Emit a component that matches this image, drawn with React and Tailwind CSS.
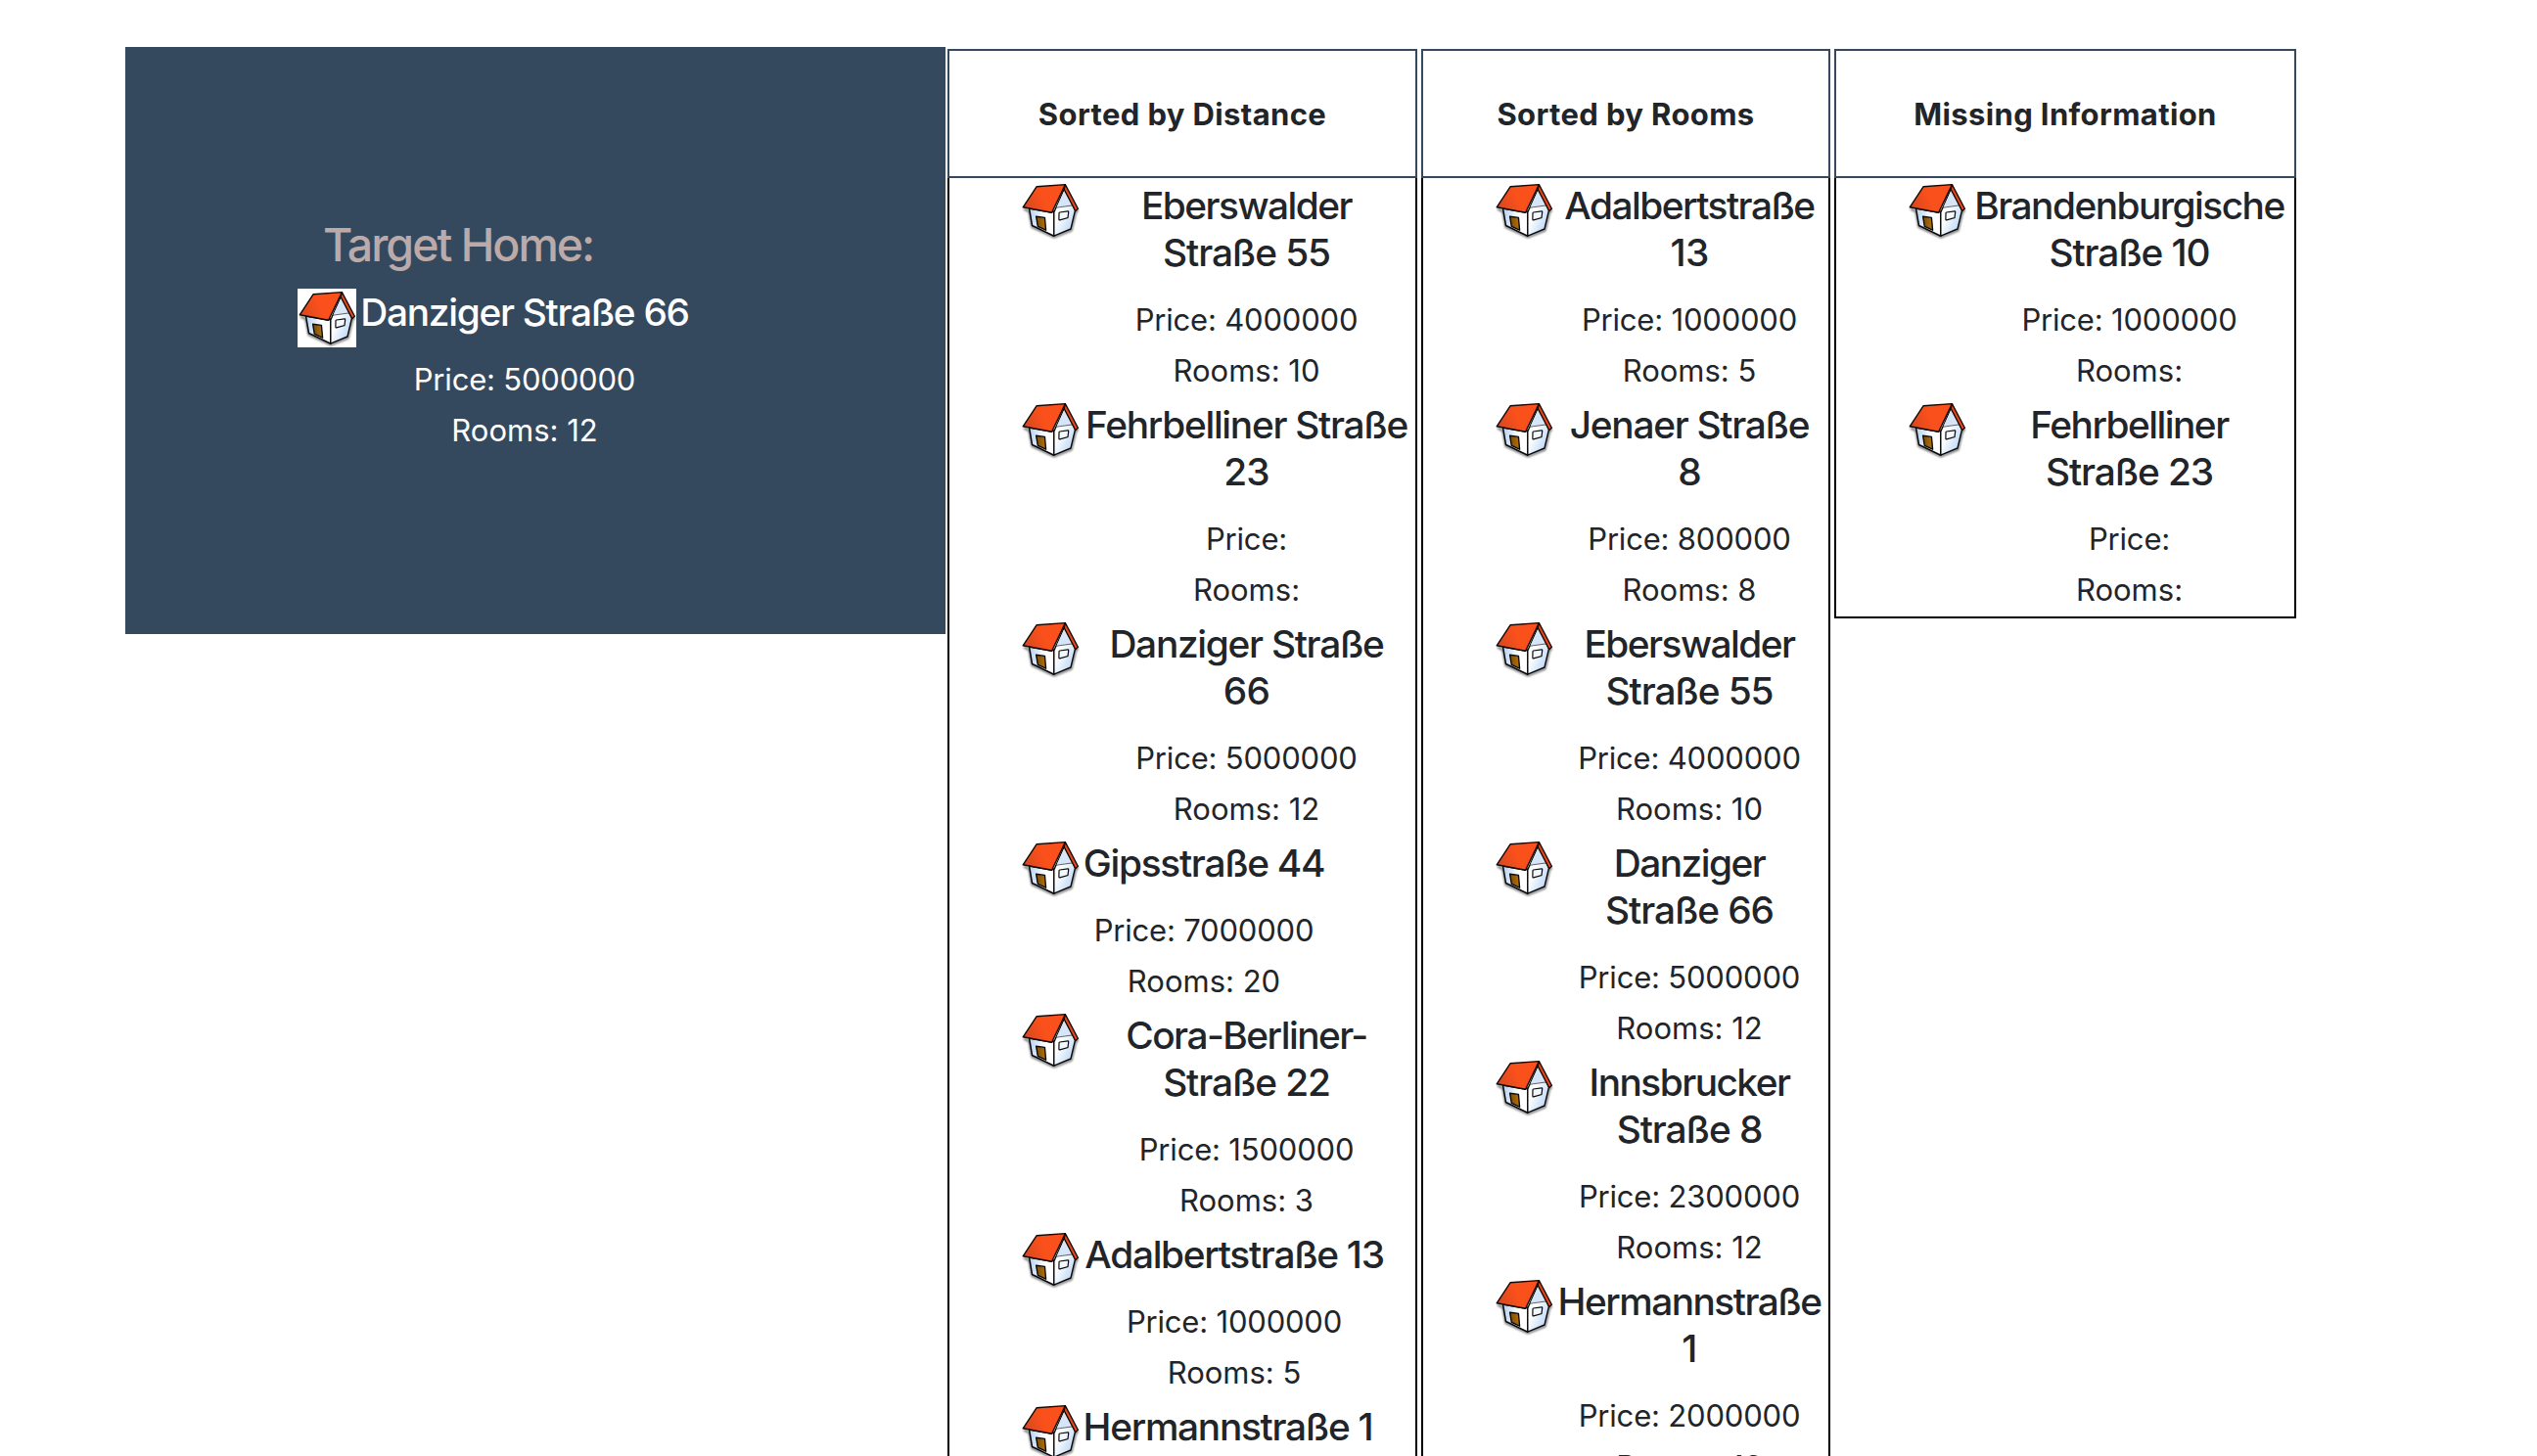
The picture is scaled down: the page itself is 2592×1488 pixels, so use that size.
function House({ className = "-mt-px" }) {
  return (
    <svg viewBox="0 0 60 60" className={`h-[60px] w-[60px] shrink-0 ${className}`}>
      <defs>
        <linearGradient id="roof" x1="0" y1="0.6" x2="1" y2="0.3">
          <stop offset="0" stopColor="#d8481f" />
          <stop offset="0.45" stopColor="#f9501c" />
          <stop offset="1" stopColor="#f9501c" />
        </linearGradient>
        <linearGradient id="wall" x1="0" y1="0.5" x2="1" y2="0.6">
          <stop offset="0" stopColor="#b5d3f6" />
          <stop offset="0.6" stopColor="#ffffff" />
        </linearGradient>
        <linearGradient id="side" x1="0" y1="0" x2="1" y2="1">
          <stop offset="0.4" stopColor="#ffffff" />
          <stop offset="0.9" stopColor="#b5d3f6" />
        </linearGradient>
        <linearGradient id="door" x1="0" y1="0" x2="1" y2="0">
          <stop offset="0" stopColor="#7a4a08" />
          <stop offset="1" stopColor="#b3730f" />
        </linearGradient>
        <filter id="soft" x="-20%" y="-20%" width="140%" height="140%">
          <feGaussianBlur stdDeviation="0.9" />
        </filter>
      </defs>
      <path d="M3 28.5L8.5 31L11.5 47L34 57.4L51.5 50.5L56 32L58.5 29.5" fill="none" stroke="#000" strokeOpacity="0.6" strokeWidth="2" filter="url(#soft)" />
      <path d="M8.5 28L11.5 45.5L33.8 56.2V31L31 32Z" fill="url(#wall)" stroke="#0a0a0a" strokeWidth="1.5" strokeLinejoin="round" />
      <path d="M33.8 32L44.5 8L55.5 30L51 49L33.8 56.2Z" fill="url(#side)" stroke="#0a0a0a" strokeWidth="1.4" strokeLinejoin="round" />
      <path d="M44.6 9L36.5 26.8L52.2 24.8Z" fill="#d6e6f8" />
      <path d="M36.4 27.2L52.6 24.9" stroke="#222" strokeWidth="0.7" />
      <path d="M16 5.8L45.4 3.6L31.6 32.3L2.2 26.8Z" fill="url(#roof)" stroke="#120804" strokeWidth="1.4" strokeLinejoin="round" />
      <path d="M45.4 3.6L58.4 28.2L55.8 30.8L44.2 8.6Z" fill="#e2481b" stroke="#120804" strokeWidth="1.3" strokeLinejoin="round" />
      <path d="M15.6 36.2L24.4 37.4L25.6 50.2L17.3 46.4Z" fill="url(#door)" stroke="#0a0a0a" strokeWidth="1.4" strokeLinejoin="round" />
      <path d="M39.6 32L48 30.8Q48.8 30.8 48.7 31.6L48 37.6L39.8 39.8Q38.9 40 38.9 39L39 32.8Q39 32.1 39.6 32Z" fill="#f4f8fd" stroke="#0a0a0a" strokeWidth="1.2" />
    </svg>
  );
}

function Home({ lines, price = "", rooms = "", width, iconClass }) {
  return (
    <div className="flex items-start gap-[2px] pb-2 last:pb-1">
      <House className={iconClass} />
      <div className={`${width} shrink-0 text-center`}>
        <h4 className="text-[38.8px] font-medium leading-[48px]">
          {lines.map((l) => (
            <span
              key={l}
              className={`block whitespace-nowrap ${l.startsWith("Straße") ? "tracking-[-0.028em]" : l.includes(" ") ? "tracking-[-0.033em]" : l.length > 2 ? "tracking-[-0.039em]" : "tracking-[-0.02em]"}`}
            >
              {l}
            </span>
          ))}
        </h4>
        <p className="mt-[21px] text-[31px] leading-[48px] tracking-[-0.006em]">Price: {price}</p>
        <p className="-mb-px mt-1 text-[31px] leading-[48px]">Rooms: {rooms}</p>
      </div>
    </div>
  );
}

function Column({ title, width, textWidth, homes }) {
  return (
    <section className={`${width} shrink-0`}>
      <div className="flex h-[132px] items-center justify-center border-2 border-[#34495e] pt-0.5">
        <h5 className="text-[31px] font-bold leading-[48px] tracking-[0.012em]">{title}</h5>
      </div>
      <div className="border-2 border-t-0 border-black pl-[73px] pt-1">
        {homes.map((h, i) => (
          <Home key={i} width={textWidth} {...h} />
        ))}
      </div>
    </section>
  );
}

const byDistance = [
  { lines: ["Eberswalder", "Straße 55"], price: "4000000", rooms: "10" },
  { lines: ["Fehrbelliner Straße", "23"] },
  { lines: ["Danziger Straße", "66"], price: "5000000", rooms: "12" },
  { lines: ["Gipsstraße 44"], price: "7000000", rooms: "20", width: "w-[250px]" },
  { lines: ["Cora-Berliner-", "Straße 22"], price: "1500000", rooms: "3" },
  { lines: ["Adalbertstraße 13"], price: "1000000", rooms: "5", width: "w-[312px]" },
  { lines: ["Hermannstraße 1"], price: "2000000", rooms: "13", width: "w-[299px]" },
];

const byRooms = [
  { lines: ["Adalbertstraße", "13"], price: "1000000", rooms: "5" },
  { lines: ["Jenaer Straße", "8"], price: "800000", rooms: "8" },
  { lines: ["Eberswalder", "Straße 55"], price: "4000000", rooms: "10" },
  { lines: ["Danziger", "Straße 66"], price: "5000000", rooms: "12" },
  { lines: ["Innsbrucker", "Straße 8"], price: "2300000", rooms: "12" },
  { lines: ["Hermannstraße", "1"], price: "2000000", rooms: "13" },
];

const missing = [
  { lines: ["Brandenburgische", "Straße 10"], price: "1000000" },
  { lines: ["Fehrbelliner", "Straße 23"] },
];

export default function App() {
  return (
    <main className="flex h-screen items-start overflow-hidden bg-white pl-32 pt-12 font-['Inter',sans-serif] text-[#212529]">
      <aside className="h-[600px] w-[838px] shrink-0 bg-[#34495e] pl-44 pt-[173px] text-white">
        <h3 className="w-[328px] text-center text-[46.5px] font-medium leading-[58px] tracking-[-0.043em] text-[#bcaaa9]">Target Home:</h3>
        <div className="mt-4">
          <Home lines={["Danziger Straße 66"]} price="5000000" rooms="12" width="w-[340px]" iconClass="bg-white" />
        </div>
      </aside>
      <div className="ml-[2px] mt-[2px] flex items-start gap-1">
        <Column title="Sorted by Distance" width="w-[480px]" textWidth="w-[337px]" homes={byDistance} />
        <Column title="Sorted by Rooms" width="w-[418px]" textWidth="w-[274px]" homes={byRooms} />
        <Column title="Missing Information" width="w-[472px]" textWidth="w-[329px]" homes={missing} />
      </div>
    </main>
  );
}
